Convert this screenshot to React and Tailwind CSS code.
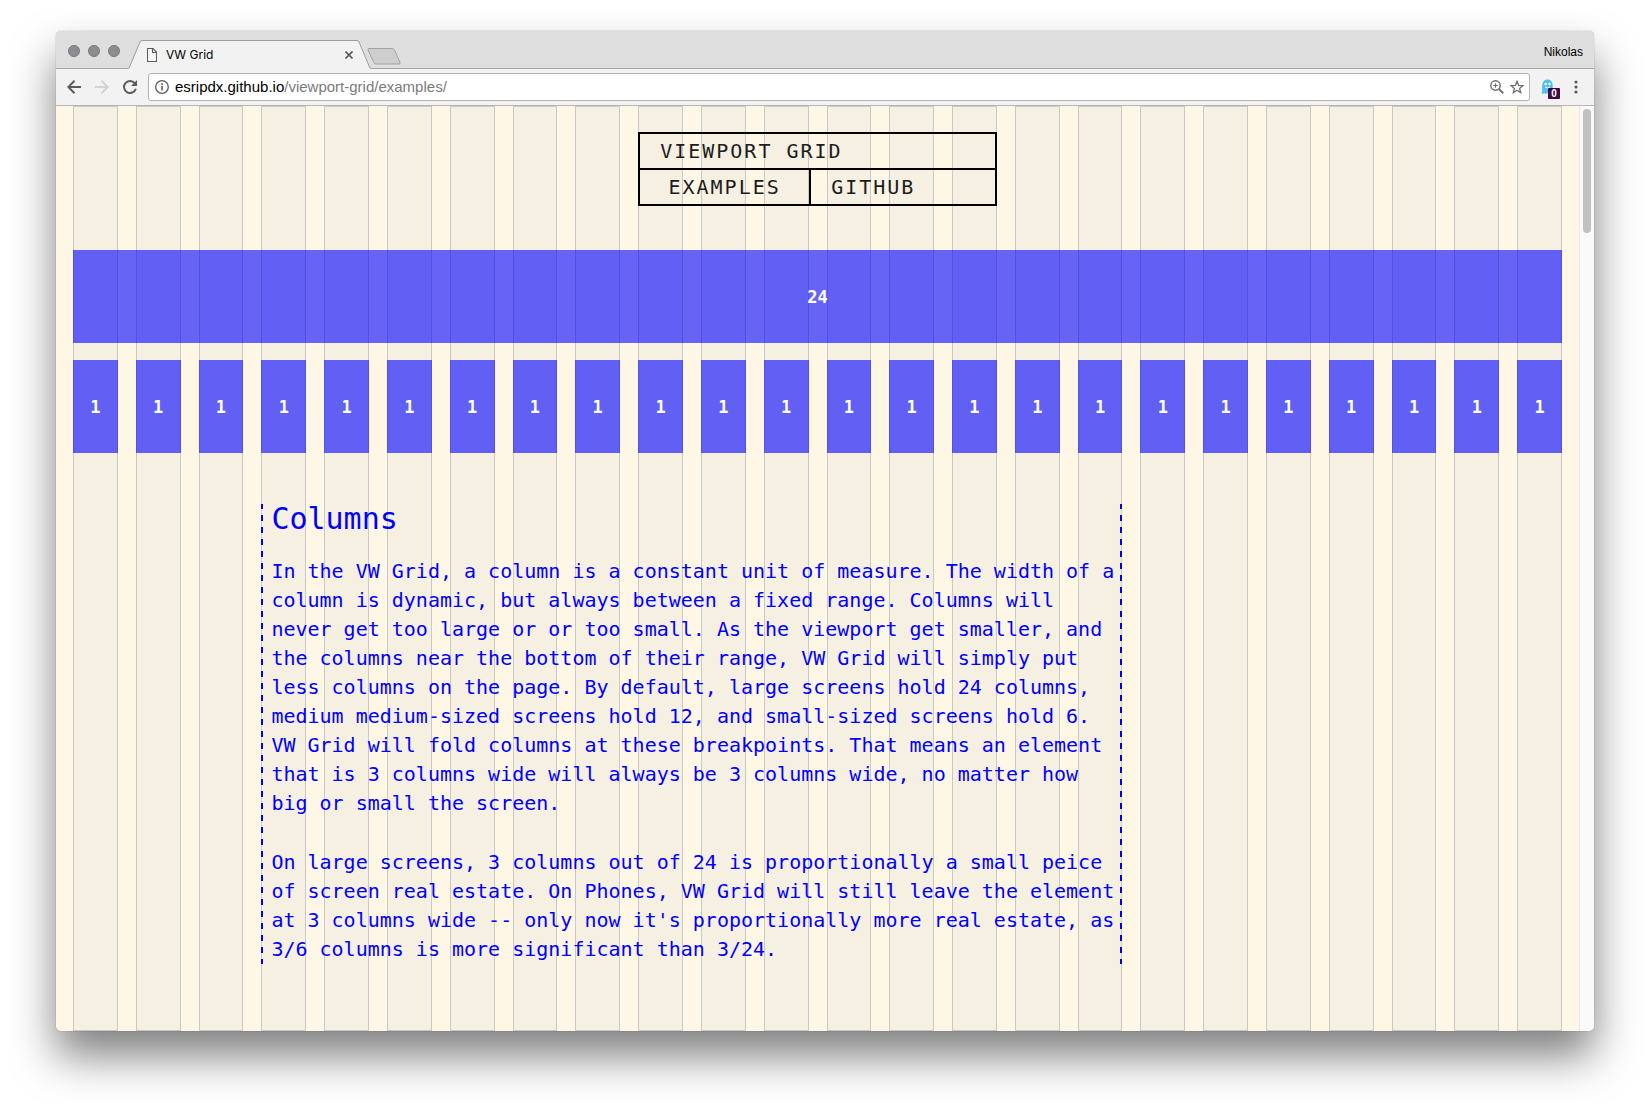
import React from "react";

const MONO = "font-['DejaVu_Sans_Mono',monospace]";
const COLUMNS = Array.from({ length: 24 }, (_, i) => i + 1);

function TitleBar() {
  return (
    <div className="flex h-[38px] shrink-0 items-end rounded-t-[5px] bg-[#dedede] font-[Inter,sans-serif] shadow-[inset_0_-1px_0_#a6a6a6]">
      <div className="flex h-full items-center gap-2 pt-px pl-3">
        <button aria-label="Close window" className="size-3 rounded-full border border-[#77777d] bg-[#8d8c92]" />
        <button aria-label="Minimize window" className="size-3 rounded-full border border-[#77777d] bg-[#8d8c92]" />
        <button aria-label="Zoom window" className="size-3 rounded-full border border-[#77777d] bg-[#8d8c92]" />
      </div>
      <div className="ml-2 flex h-[29px]">
        <svg width="14" height="29" viewBox="0 0 14 29" className="block" aria-hidden="true">
          <path d="M0 29V28.5L1.5 27 12 2Q12.500 .5 14 .5V29Z" fill="#f2f2f2" />
          <path d="M0 28.500Q1 28.500 1.500 27L12 2Q12.500 .5 14 .5" fill="none" stroke="#9c9c9c" />
        </svg>
        <div className="flex w-[215px] items-center border-t border-[#9c9c9c] bg-[#f2f2f2] pr-[3px] pl-[5px]">
          <svg width="10" height="14" viewBox="0 0 10 14" fill="#f8f8f8" stroke="#5c5c5c" className="shrink-0" aria-hidden="true">
            <path d="M.5.500h5.500l3.500 3.500v9.500h-9zM5.500.500v4h4" strokeWidth="1.100" />
          </svg>
          <span className="ml-[9px] flex-1 text-[12px] leading-4 text-black">VW Grid</span>
          <button aria-label="Close tab" className="flex size-[10px] items-center justify-center">
            <svg width="8" height="8" viewBox="0 0 8 8" stroke="#5a5a5a" strokeWidth="1.600">
              <path d="M.5.500l7 7M7.500.500l-7 7" />
            </svg>
          </button>
        </div>
        <svg width="14" height="29" viewBox="0 0 14 29" className="block" aria-hidden="true">
          <path d="M14 29V28.500L12.500 27 2 2Q1.500 .5 0 .5V29Z" fill="#f2f2f2" />
          <path d="M14 28.500Q13 28.500 12.500 27L2 2Q1.500 .5 0 .5" fill="none" stroke="#9c9c9c" />
        </svg>
      </div>
      <button aria-label="New tab" className="mb-1 -ml-1">
        <svg width="34" height="17" viewBox="0 0 34 17" className="block">
          <path d="M2 .5H25Q26.500 .5 27.500 2L33 14.500Q33.500 16 32 16H9Q7.500 16 6.800 14.500L1 2Q.5 .5 2 .5Z" fill="#cecece" stroke="#a3a3a3" />
        </svg>
      </button>
      <button className="mr-[11px] mb-[9px] ml-auto font-['Liberation_Sans',sans-serif] text-[12px] leading-4 text-black">Nikolas</button>
    </div>
  );
}

function Toolbar() {
  return (
    <div className="flex h-[37px] shrink-0 items-center border-b border-[#b5b5b5] bg-[#f2f2f2] pl-[11px] font-['Liberation_Sans',sans-serif]">
      <button aria-label="Back" className="mr-[14px]">
        <svg width="14" height="14" viewBox="0 0 14 14" fill="none" stroke="#5c5c5c" strokeWidth="2">
          <path d="M14 7H1.500M7.500.800 1.300 7l6.200 6.200" />
        </svg>
      </button>
      <button aria-label="Forward" className="mr-[14px]">
        <svg width="14" height="14" viewBox="0 0 14 14" fill="none" stroke="#d3d3d3" strokeWidth="2">
          <path d="M0 7h12.500M6.500.800 12.700 7l-6.200 6.200" />
        </svg>
      </button>
      <button aria-label="Reload" className="mr-[11px]">
        <svg width="14" height="14" viewBox="0 0 14 14" fill="none">
          <path d="M11.700 3.200A6 6 0 1 0 12.800 8.700" stroke="#5c5c5c" strokeWidth="2" />
          <path d="M14 0v6H8z" fill="#5c5c5c" />
        </svg>
      </button>
      <div className="flex h-7 flex-1 items-center rounded-[3px] border border-[#b3b3b3] bg-white pr-[5px] pl-[6px]">
        <svg width="14" height="14" viewBox="0 0 14 14" fill="none" stroke="#5c5c5c" className="shrink-0" aria-hidden="true">
          <circle cx="7" cy="7" r="6.300" strokeWidth="1.300" />
          <path d="M7 6v4.500M7 3.300v1.600" strokeWidth="1.600" />
        </svg>
        <a href="#top" className="ml-[6px] flex-1 text-[15px] leading-5 text-[#7b7b7b]">
          <span className="text-black">esripdx.github.io</span>/viewport-grid/examples/
        </a>
        <button aria-label="Zoom level" className="mr-[6px]">
          <svg width="14" height="14" viewBox="0 0 14 14" fill="none" stroke="#6e6e6e">
            <circle cx="5.500" cy="5.500" r="4.700" strokeWidth="1.400" />
            <path d="M9 9l4.300 4.300" strokeWidth="1.900" />
            <path d="M3.200 5.500h4.600M5.500 3.200v4.600" strokeWidth="1.100" />
          </svg>
        </button>
        <button aria-label="Bookmark this page">
          <svg width="14" height="14" viewBox="0 0 14 14" fill="none" stroke="#6e6e6e" strokeWidth="1.300">
            <path d="M7 1.300 8.600 5.300 13 5.600 9.600 8.400 10.700 12.700 7 10.300 3.300 12.700 4.400 8.400 1 5.600 5.400 5.300z" />
          </svg>
        </button>
      </div>
      <button aria-label="Ghostery, 0 trackers" className="relative ml-[11px] h-5 w-[19px]">
        <svg width="13" height="16" viewBox="0 0 13 16" className="block">
          <path d="M.6 14.500C1.500 12 1 9 1.200 6 1.500 2.500 3.500.500 6.500.500s5 2 5.200 5.500c.1 3-.3 6 .8 8.500-1.300.5-2 0-3-.600-1.200 1.300-2.200 1.300-3.200.2-1 1-2 1-2.800-.2-1 .8-1.800 1-2.900.6z" fill="#52c1ea" />
          <circle cx="4.700" cy="5" r="1.200" fill="white" />
          <circle cx="8.500" cy="5" r="1.200" fill="white" />
          <path d="M4 8q2.500 2 5 0" stroke="white" fill="none" />
        </svg>
        <span className="absolute right-0 -bottom-0.5 flex h-[11px] w-3 items-center justify-center rounded-[1px] bg-[#3d0a45] text-[10px] leading-none font-bold text-white">0</span>
      </button>
      <button aria-label="Menu" className="mr-4 ml-[14px]">
        <svg width="4" height="14" viewBox="0 0 4 14" fill="#5c5c5c">
          <circle cx="2" cy="2" r="1.600" />
          <circle cx="2" cy="7" r="1.600" />
          <circle cx="2" cy="12" r="1.600" />
        </svg>
      </button>
    </div>
  );
}

function Block({ children, wide }) {
  return (
    <div className={`flex h-[93px] items-center justify-center bg-[#0000ff]/60 text-[17px] leading-6 font-bold text-white ${wide ? "col-span-24" : ""}`}>
      {children}
    </div>
  );
}

export default function App() {
  return (
    <div id="top" className="flex min-h-screen flex-col bg-white px-14 pt-[31px] pb-20">
      <div className="flex flex-1 flex-col rounded-[5px] shadow-[0_25px_44px_rgba(0,0,0,0.5),0_0_1px_rgba(0,0,0,0.6)]">
        <TitleBar />
        <Toolbar />
        <div className="flex flex-1 overflow-hidden rounded-b-[5px]">
          <main className={`relative flex-1 bg-[#fef7e6] px-[17px] ${MONO}`}>
            <div aria-hidden="true" className="absolute inset-0 grid grid-cols-24 gap-x-[18px] px-[17px]">
              {COLUMNS.map((n) => (
                <div key={n} className="border border-[#c9c9c9] bg-[#f6f0e3]" />
              ))}
            </div>
            <div className="relative grid grid-cols-24 gap-x-[18px] pt-[26px] pb-[67px]">
              <nav className="col-span-6 col-start-10 border-2 border-black text-[20px] leading-[34px] tracking-[2px] text-[#1c1c1c]">
                <a href="#top" className="block border-b-2 border-black pl-5">VIEWPORT GRID</a>
                <div className="flex">
                  <a href="#columns" className="w-[171px] border-r-2 border-black text-center">EXAMPLES</a>
                  <a href="#github" className="flex-1 pl-5">GITHUB</a>
                </div>
              </nav>
              <section className="col-span-24 mt-11 grid grid-cols-subgrid gap-y-[17px]">
                <Block wide>24</Block>
                {COLUMNS.map((n) => (
                  <Block key={n}>1</Block>
                ))}
              </section>
              <article
                id="columns"
                className="col-span-14 col-start-4 mt-[51px] bg-[image:linear-gradient(#0000ff_50%,transparent_50%),linear-gradient(#0000ff_50%,transparent_50%)] bg-[length:2px_12px] bg-[position:left_-1px,right_-1px] bg-repeat-y pl-[10px] text-[20px] leading-[29px] text-[#0000ff]"
              >
                <h1 className="text-[30px] leading-[30px] font-medium">Columns</h1>
                <p className="mt-[23px]">
                  In the VW Grid, a column is a constant unit of measure. The width of a column is dynamic, but always
                  between a fixed range. Columns will never get too large or or too small. As the viewport get smaller,
                  and the columns near the bottom of their range, VW Grid will simply put less columns on the page. By
                  default, large screens hold 24 columns, medium medium-sized screens hold 12, and small-sized screens
                  hold 6. VW Grid will fold columns at these breakpoints. That means an element that is 3 columns wide
                  will always be 3 columns wide, no matter how big or small the screen.
                </p>
                <p className="mt-[30px]">
                  On large screens, 3 columns out of 24 is proportionally a small peice of screen real estate. On
                  Phones, VW Grid will still leave the element at 3 columns wide -- only now it's proportionally more
                  real estate, as 3/6 columns is more significant than 3/24.
                </p>
              </article>
            </div>
          </main>
          <div aria-hidden="true" className="w-[15px] border-l border-[#e8e8e8] bg-[#fafafa] pt-[3px] pl-[3px]">
            <div className="h-[124px] w-2 rounded-full bg-[#c1c1c1]" />
          </div>
        </div>
      </div>
    </div>
  );
}
